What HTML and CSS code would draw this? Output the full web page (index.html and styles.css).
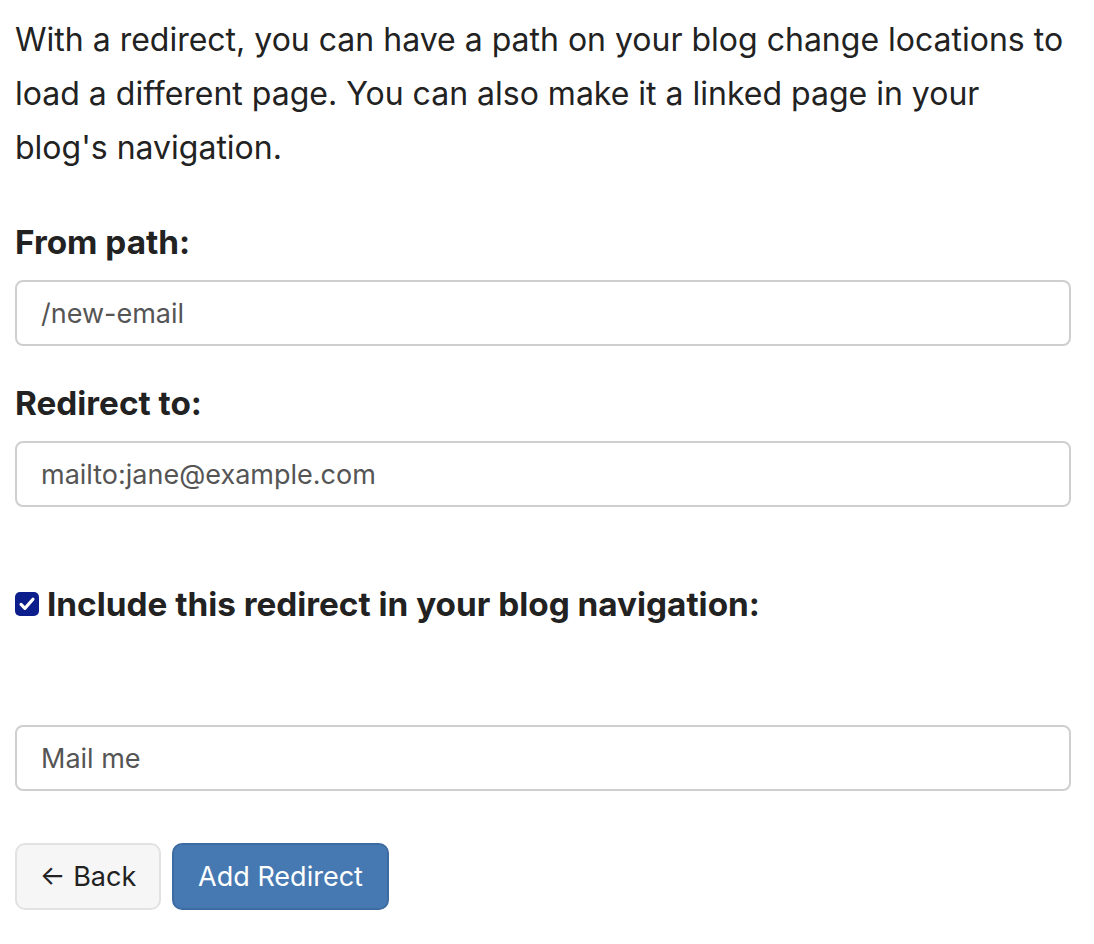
FILE: index.html
```html
<!DOCTYPE html>
<html>
<head>
<meta charset="utf-8">
<link rel="stylesheet" href="styles.css">
</head>
<body>
<main class="page">
  <p class="intro">With a redirect, you can have a path on your blog change locations to load a different page. You can also make it a linked page in your blog's navigation.</p>
  <form class="form">
    <label class="label" for="from">From path:</label>
    <input class="field" id="from" type="text" value="/new-email">
    <label class="label" for="to">Redirect to:</label>
    <input class="field" id="to" type="text" value="mailto:jane@example.com">
    <label class="check-row">
      <span class="check">
        <svg viewBox="0 0 24 24" width="22" height="22"><path d="M5.5 12.5l4.2 4.3 8.8-10" fill="none" stroke="#fff" stroke-width="3.4" stroke-linecap="round" stroke-linejoin="round"/></svg>
      </span>
      <span class="check-text">Include this redirect in your blog navigation:</span>
    </label>
    <input class="field nav-field" type="text" value="Mail me">
    <div class="actions">
      <button type="button" class="btn btn-back">← Back</button>
      <button type="button" class="btn btn-primary">Add Redirect</button>
    </div>
  </form>
</main>
</body>
</html>
```
FILE: styles.css
```css
html, body {
  margin: 0;
  padding: 0;
  background: #fff;
}
body {
  font-family: Inter, "Noto Sans", sans-serif;
  color: #222;
}
.page {
  padding: 0 23px 0 15px;
}
.intro {
  margin: 13px 0 10px;
  font-size: 32px;
  line-height: 54px;
  color: #222;
}
.form {
  display: flex;
  flex-direction: column;
}
.label {
  display: block;
  font-size: 33.3px;
  font-weight: 700;
  line-height: 40px;
  margin-top: 37px;
  margin-bottom: 18px;
  color: #222;
}
.field {
  box-sizing: border-box;
  width: 100%;
  height: 66px;
  border: 2px solid #cfcfcf;
  border-radius: 8px;
  padding: 0 24px;
  font-family: Inter, "Noto Sans", sans-serif;
  font-size: 27px;
  color: #555;
  background: #fff;
  margin: 0;
}
.check-row {
  display: flex;
  align-items: center;
  gap: 8px;
  margin-top: 77px;
  font-size: 33.3px;
  font-weight: 700;
  line-height: 40px;
  color: #222;
}
.check {
  width: 24px;
  height: 24px;
  border-radius: 5px;
  background: #0c1d8c;
  display: flex;
  align-items: center;
  justify-content: center;
  flex: none;
}
.nav-field {
  margin-top: 101px;
}
.actions {
  display: flex;
  gap: 11px;
  margin-top: 52px;
}
.btn {
  box-sizing: border-box;
  height: 67px;
  border-radius: 10px;
  font-family: Inter, "Noto Sans", sans-serif;
  font-size: 27px;
  padding: 0;
  cursor: pointer;
}
.btn-back {
  width: 146px;
  background: #f6f6f6;
  border: 2px solid #e2e2e2;
  color: #222;
}
.btn-primary {
  width: 217px;
  background: #4679b2;
  border: 2px solid #3d6ca3;
  color: #fff;
}
```
